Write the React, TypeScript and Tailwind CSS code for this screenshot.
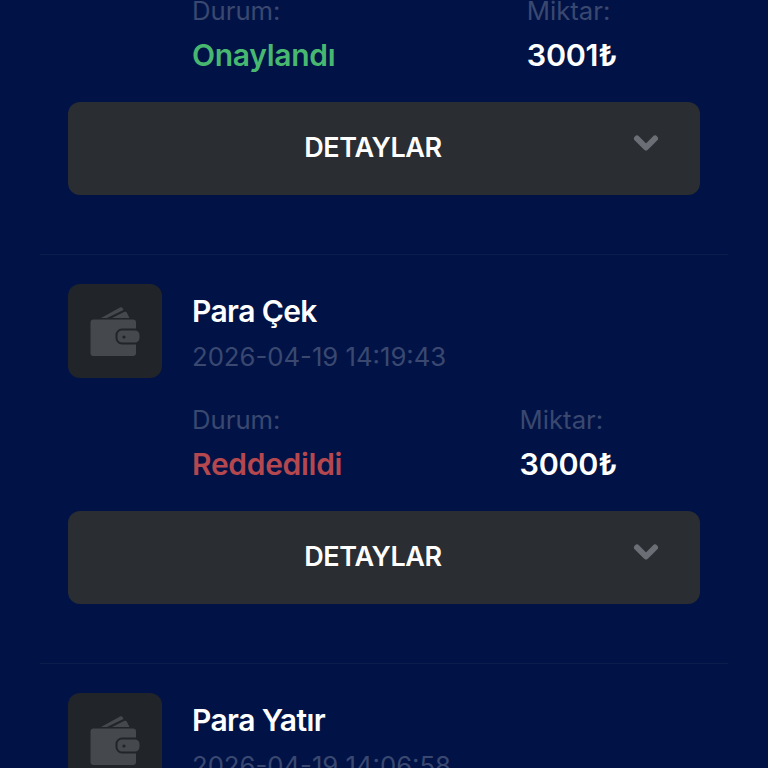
import { ChevronDown } from "lucide-react";

type Transaction = {
  title: string;
  date: string;
  status: string;
  statusClass: string;
  amount: string;
};

const transactions: Transaction[] = [
  { title: "Para Yatır", date: "2026-04-19 14:32:10", status: "Onaylandı", statusClass: "text-[#48b871]", amount: "3001₺" },
  { title: "Para Çek", date: "2026-04-19 14:19:43", status: "Reddedildi", statusClass: "text-[#b5474f]", amount: "3000₺" },
  { title: "Para Yatır", date: "2026-04-19 14:06:58", status: "Onaylandı", statusClass: "text-[#48b871]", amount: "3000₺" },
];

function WalletIcon() {
  return (
    <svg width="52" height="50" viewBox="-1 0 52 50" fill="none">
      <path d="M11 12 L30 1.5 C31 1 32 1.2 32.5 2 L33.5 4 L17 12 Z" fill="#45484d" />
      <path d="M22 12 L34 6 C35.5 5.4 36.5 5.8 37 7 L39.5 12 Z" fill="#45484d" />
      <rect x="0.5" y="13.5" width="45.5" height="36.5" rx="3" fill="#45484d" />
      <rect x="26.5" y="23.5" width="24" height="14" rx="5.5" fill="#45484d" stroke="#212429" strokeWidth="2" />
      <circle cx="34" cy="31" r="1.6" fill="#212429" />
    </svg>
  );
}

function TransactionRow({ t }: { t: Transaction }) {
  return (
    <div className="h-[409px] border-t border-[#0c1d4c] px-7 pt-[29px]">
      <div className="flex gap-[30px]">
        <div className="flex h-[94px] w-[94px] items-center justify-center rounded-xl bg-[#212429]">
          <WalletIcon />
        </div>
        <div className="pt-[8px]">
          <div className="text-[30px] leading-[38px] font-semibold tracking-[-0.6px] text-white">{t.title}</div>
          <div className="mt-[8px] text-[25.7px] leading-[38px] text-[#3a4870]">{t.date}</div>
        </div>
      </div>
      <div className="mt-[23px] flex justify-between pr-[83px] pl-[124px]">
        <div>
          <div className="text-[25.7px] leading-[38px] text-[#3a4870]">Durum:</div>
          <div className={`mt-[6px] text-[30px] leading-[38px] font-semibold tracking-[-0.3px] ${t.statusClass}`}>
            {t.status}
          </div>
        </div>
        <div>
          <div className="text-[25.7px] leading-[38px] text-[#3a4870]">Miktar:</div>
          <div className="mt-[6px] text-[30.5px] leading-[38px] font-semibold tracking-[-0.3px] text-white">
            {t.amount}
          </div>
        </div>
      </div>
      <div className="relative mt-[28px] flex h-[93px] items-center justify-center rounded-xl bg-[#2a2d31] pr-[22px]">
        <span className="text-[27px] font-semibold tracking-[-0.4px] text-white">DETAYLAR</span>
        <ChevronDown size={36} strokeWidth={4} className="absolute top-[23px] right-[36px] text-[#6b6e74]" />
      </div>
    </div>
  );
}

export default function App() {
  return (
    <div className="h-[768px] overflow-hidden bg-[#011346] font-['Inter',sans-serif]">
      <div className="mx-10 -mt-[155px]">
        {transactions.map((t, i) => (
          <TransactionRow key={i} t={t} />
        ))}
      </div>
    </div>
  );
}
